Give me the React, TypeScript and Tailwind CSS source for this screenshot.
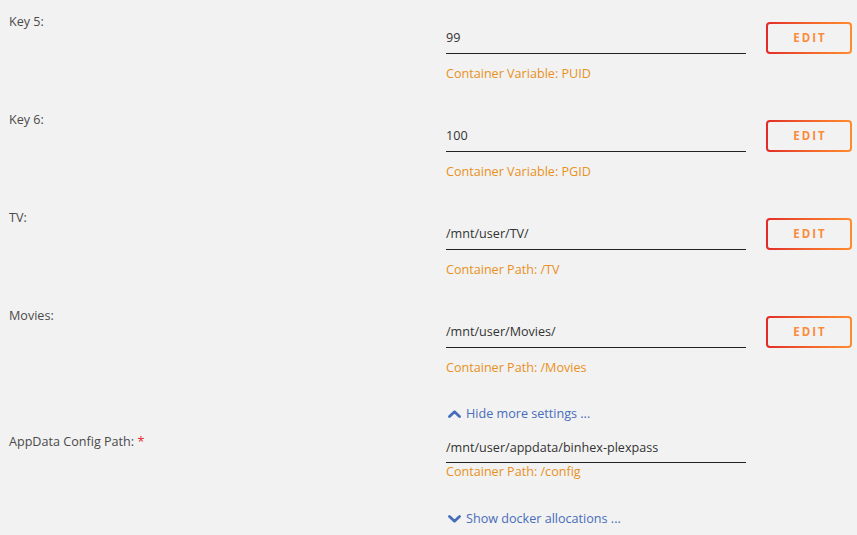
import React from "react";

const rows = [
  { label: "Key 5:", value: "99", help: "Container Variable: PUID" },
  { label: "Key 6:", value: "100", help: "Container Variable: PGID" },
  { label: "TV:", value: "/mnt/user/TV/", help: "Container Path: /TV" },
  { label: "Movies:", value: "/mnt/user/Movies/", help: "Container Path: /Movies" },
];

const Chevron: React.FC<{ up?: boolean }> = ({ up }) => (
  <svg width="13" height="8" viewBox="0 0 13 8" className="mr-[5px]">
    <path
      d={up ? "M1.5 6.5 L6.5 1.8 L11.5 6.5" : "M1.5 1.5 L6.5 6.2 L11.5 1.5"}
      fill="none"
      stroke="#486dba"
      strokeWidth="2.8"
      strokeLinecap="round"
      strokeLinejoin="round"
    />
  </svg>
);

const EditButton: React.FC = () => (
  <div className="ml-[20px] w-[86px] h-[32px] rounded-[4px] bg-gradient-to-r from-[#e22828] to-[#ff8c2f] p-[2px]">
    <div className="w-full h-full rounded-[2px] bg-[#f2f2f2] flex items-center justify-center">
      <span className="text-[11.5px] font-bold tracking-[2px] text-[#fa8c3c] pl-[2px]">EDIT</span>
    </div>
  </div>
);

const App: React.FC = () => {
  return (
    <div
      className="w-[857px] h-[535px] bg-[#f2f2f2] text-[12.6px] text-[#4a4a4a] overflow-hidden"
      style={{ fontFamily: '"Open Sans", "Noto Sans", sans-serif' }}
    >
      {rows.map((row) => (
        <div key={row.label} className="flex h-[98px]">
          <div className="w-[446px] pl-[9px] mt-[12px] leading-[20px]">{row.label}</div>
          <div className="mt-[22px]">
            <div className="flex">
              <div className="w-[300px] h-[32px] pt-[2px] border-b border-[#222] flex items-center text-[#333]">
                {row.value}
              </div>
              <EditButton />
            </div>
            <div className="mt-[10px] leading-[20px] text-[#e8911c]">{row.help}</div>
          </div>
        </div>
      ))}

      <div className="flex h-[32px] pt-[12px] pl-[448px] items-center leading-[20px] text-[#486dba]">
        <Chevron up />
        <span>Hide more settings ...</span>
      </div>

      <div className="flex">
        <div className="w-[446px] pl-[9px] mt-[8px] leading-[20px]">
          AppData Config Path: <span className="text-[#e22828]">*</span>
        </div>
        <div className="mt-[10px]">
          <div className="w-[300px] h-[29px] pt-[1px] border-b border-[#222] flex items-center text-[#333]">
            /mnt/user/appdata/binhex-plexpass
          </div>
          <div className="mt-[1px] leading-[16px] text-[#e8911c]">Container Path: /config</div>
        </div>
      </div>

      <div className="flex mt-[29px] pl-[448px] items-center leading-[20px] text-[#486dba]">
        <Chevron />
        <span>Show docker allocations ...</span>
      </div>
    </div>
  );
};

export default App;
